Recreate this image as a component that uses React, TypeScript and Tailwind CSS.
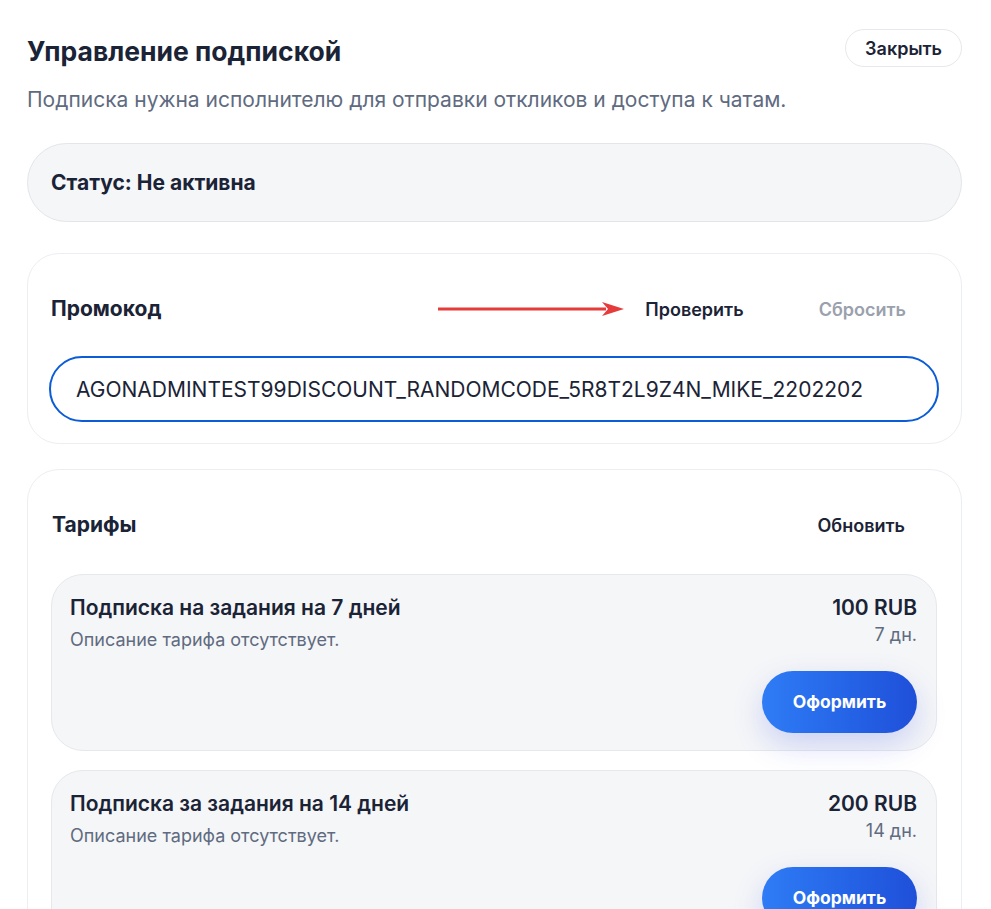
import { useEffect, useRef, useState } from 'react';

interface Tariff {
    title: string;
    price: string;
    days: string;
}

const tariffs: Tariff[] = [
    { title: 'Подписка на задания на 7 дней', price: '100 RUB', days: '7 дн.' },
    { title: 'Подписка за задания на 14 дней', price: '200 RUB', days: '14 дн.' },
];

function TariffCard({ tariff }: { tariff: Tariff }) {
    return (
        <div className="rounded-[32px] border border-[#e6e8ec] bg-[#f5f6f8] pl-[18px] pr-[19px] pt-5 pb-[17px]">
            <div className="flex items-start justify-between gap-4">
                <div>
                    <h3 className="text-[21px] font-semibold leading-[26px] text-[#1b2336]">{tariff.title}</h3>
                    <p className="mt-[5px] text-[18px] leading-7 text-[#5f6b80]">Описание тарифа отсутствует.</p>
                </div>
                <div className="text-right">
                    <div className="text-[21px] font-semibold leading-[26px] text-[#1b2336]">{tariff.price}</div>
                    <div className="mt-[2px] text-[18px] leading-6 text-[#5f6b80]">{tariff.days}</div>
                </div>
            </div>
            <div className="mt-[17px] flex justify-end">
                <button className="h-[62px] w-[155px] rounded-full bg-gradient-to-r from-[#2f7cf6] to-[#1f4fd9] text-[17.5px] font-bold text-white shadow-[0_12px_30px_rgba(59,84,230,0.22)]">
                    Оформить
                </button>
            </div>
        </div>
    );
}

export default function App() {
    const [code, setCode] = useState('AGONADMINTEST99DISCOUNT_RANDOMCODE_5R8T2L9Z4N_MIKE_2202202');
    const inputRef = useRef<HTMLInputElement>(null);

    useEffect(() => {
        const el = inputRef.current;
        if (el) {
            el.focus();
            el.setSelectionRange(el.value.length, el.value.length);
        }
    }, []);

    return (
        <div className="min-h-screen bg-white font-['Inter',sans-serif]">
            <div className="w-[935px] ml-[27px] pt-[29px]">
                {/* Header */}
                <div className="flex items-start justify-between">
                    <h1 className="mt-[5px] text-[26.5px] font-bold leading-[34px] text-[#1b2336]">Управление подпиской</h1>
                    <button className="h-[38px] rounded-full border border-[#e6e8ec] bg-white px-[19px] text-[18px] font-semibold text-[#1b2336]">
                        Закрыть
                    </button>
                </div>
                <p className="mt-[18px] text-[21px] leading-7 text-[#5f6b80]">
                    Подписка нужна исполнителю для отправки откликов и доступа к чатам.
                </p>

                {/* Status */}
                <div className="mt-[29px] flex h-[79px] items-center rounded-full border border-[#e3e5e9] bg-[#f5f6f8] px-[23px]">
                    <span className="text-[21px] font-bold text-[#1b2336]">Статус: Не активна</span>
                </div>

                {/* Promo */}
                <div className="mt-[31px] rounded-[32px] border border-[#eceef1] bg-white px-[21px] pt-[43px] pb-[21px]">
                    <div className="flex h-6 items-center">
                        <h2 className="ml-[2px] text-[21px] font-bold text-[#1b2336]">Промокод</h2>
                        <div className="flex-1" />
                        <svg width="186" height="16" viewBox="0 0 186 16">
                            <line x1="0" y1="8" x2="168" y2="8" stroke="#e63b3b" strokeWidth="3" />
                            <polygon points="164,1 186,8 164,15 170,8" fill="#e63b3b" />
                        </svg>
                        <button className="ml-[21px] text-[18px] font-semibold text-[#1b2336]">Проверить</button>
                        <button className="ml-[75px] mr-[34px] text-[18px] font-semibold text-[#9aa1ad]">Сбросить</button>
                    </div>
                    <input
                        ref={inputRef}
                        value={code}
                        onChange={(e) => setCode(e.target.value)}
                        className="mt-[35px] h-[66px] w-[890px] rounded-full border-2 border-[#0b5cd6] bg-white px-[25px] text-[21px] text-[#1b2336] caret-[#1b2336] outline-none"
                    />
                </div>

                {/* Tariffs */}
                <div className="mt-[25px] rounded-[32px] border border-[#eceef1] bg-white pl-[23px] pr-6 pt-[43px] pb-6">
                    <div className="flex h-6 items-center justify-between">
                        <h2 className="ml-px text-[21px] font-bold text-[#1b2336]">Тарифы</h2>
                        <button className="mr-[32px] text-[18px] font-semibold text-[#1b2336]">Обновить</button>
                    </div>
                    <div className="mt-[37px] flex flex-col gap-[19px]">
                        {tariffs.map((t) => (
                            <TariffCard key={t.title} tariff={t} />
                        ))}
                    </div>
                </div>
            </div>
        </div>
    );
}
